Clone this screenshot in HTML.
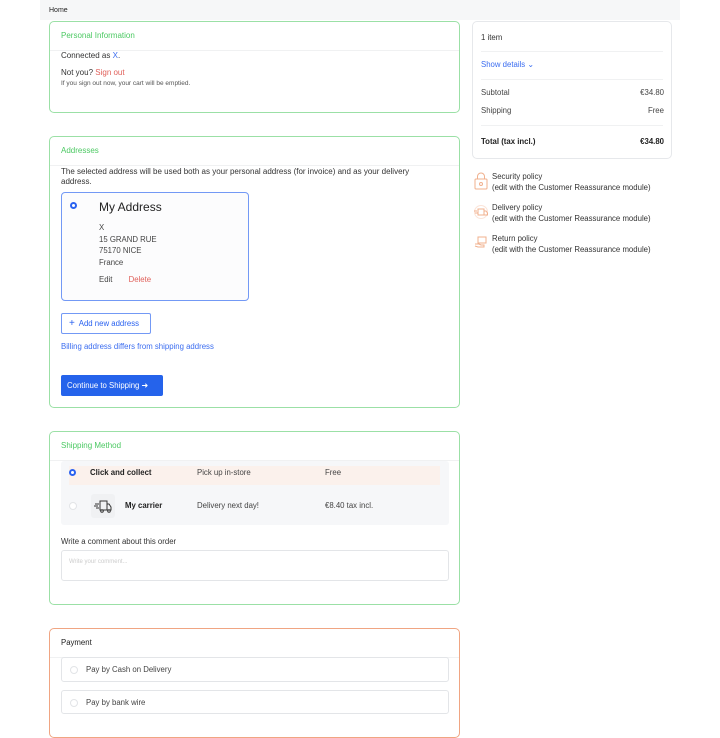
<!DOCTYPE html>
<html><head><meta charset="utf-8"><style>
*{margin:0;padding:0;box-sizing:border-box}
body{width:720px;height:720px;overflow:hidden;background:#fff;font-family:"Liberation Sans",sans-serif;color:#333;position:relative;font-size:8px}
.a{position:absolute;white-space:nowrap;line-height:1}
.card{position:absolute;border:1px solid #9be0a6;border-radius:5px;background:#fff}
.hd{position:absolute;left:11px;color:#4cc963;font-size:8px}
.dv{position:absolute;left:0;right:0;height:1px;background:#f0f1f2}
.rad{position:absolute;width:8px;height:8px;border-radius:50%;border:1px solid #e2e4e7;background:#fff}
.rsel{border:2.5px solid #2a62f0}
.box{position:absolute;border:1px solid #e3e5e8;border-radius:3px;background:#fff}
.ri{position:absolute;right:0}
</style></head><body>
<div class="a" style="left:40px;top:0;width:640px;height:20px;background:#f6f7f8"></div>
<div class="a" style="left:49px;top:7px;font-size:7px;color:#222">Home</div>

<!-- Personal -->
<div class="card" style="left:49px;top:21px;width:411px;height:92px">
 <div class="hd a" style="top:10px">Personal Information</div>
 <div class="dv" style="top:28px"></div>
 <div class="a" style="left:11px;top:30px;font-size:8px;color:#333">Connected as <span style="color:#3b6df0">X</span>.</div>
 <div class="a" style="left:11px;top:47px;font-size:8px;color:#333">Not you? <span style="color:#e0605a">Sign out</span></div>
 <div class="a" style="left:11px;top:59px;font-size:6.5px;color:#555">If you sign out now, your cart will be emptied.</div>
</div>

<!-- Addresses -->
<div class="card" style="left:49px;top:136px;width:411px;height:272px">
 <div class="hd a" style="top:10px">Addresses</div>
 <div class="dv" style="top:28px"></div>
 <div class="a" style="left:11px;top:30px;font-size:8px;line-height:9.5px;color:#333;white-space:normal;width:370px">The selected address will be used both as your personal address (for invoice) and as your delivery address.</div>
 <div class="a" style="left:11px;top:55px;width:188px;height:109px;border:1px solid #7399f5;border-radius:4px;background:#fcfcfd">
  <div class="rad rsel" style="left:8px;top:9px;width:7px;height:7px"></div>
  <div class="a" style="left:37px;top:8px;font-size:12px;color:#222">My Address</div>
  <div class="a" style="left:37px;top:29px;font-size:7.8px;line-height:11.7px;color:#444">X<br>15 GRAND RUE<br>75170 NICE<br>France</div>
  <div class="a" style="left:37px;top:83px;font-size:7.8px;color:#444">Edit <span style="color:#e0605a;margin-left:14px">Delete</span></div>
 </div>
 <div class="a" style="left:11px;top:176px;width:90px;height:21px;border:1px solid #7399f5;border-radius:2px;color:#2a62f0;font-size:7.8px;padding:5px 0 0 7px"><span style="font-size:10px">+</span>&nbsp; Add new address</div>
 <div class="a" style="left:11px;top:206px;font-size:7.8px;color:#3b6df0">Billing address differs from shipping address</div>
 <div class="a" style="left:11px;top:238px;width:102px;height:21px;background:#2563eb;border-radius:2px;color:#fff;font-size:7.8px;padding:7px 0 0 6px">Continue to Shipping &#10140;</div>
</div>

<!-- Shipping -->
<div class="card" style="left:49px;top:431px;width:411px;height:174px">
 <div class="hd a" style="top:10px">Shipping Method</div>
 <div class="dv" style="top:28px"></div>
 <div class="a" style="left:11px;top:29px;width:388px;height:64px;background:#f6f7f9;border-radius:3px">
  <div class="a" style="left:8px;top:5px;width:371px;height:19px;background:#fbf1ec"></div>
  <div class="rad rsel" style="left:8px;top:8px;width:7px;height:7px"></div>
  <div class="a" style="left:29px;top:8px;font-size:7.8px;font-weight:bold;color:#222">Click and collect</div>
  <div class="a" style="left:136px;top:8px;font-size:7.8px;color:#444">Pick up in-store</div>
  <div class="a" style="left:264px;top:8px;font-size:7.8px;color:#444">Free</div>
  <div class="rad" style="left:8px;top:41px"></div>
  <div class="a" style="left:30px;top:33px;width:24px;height:24px;background:#f0f1f3;border-radius:3px">
   <svg width="24" height="24" viewBox="0 0 24 24" fill="none" stroke="#333" stroke-width="1"><path d="M9 7h7v9H9zM16 10h2l2 3v3h-4M4 10h4M3 12h4M5 14h3"/><circle cx="11" cy="17" r="1.3"/><circle cx="18" cy="17" r="1.3"/></svg>
  </div>
  <div class="a" style="left:64px;top:41px;font-size:7.8px;font-weight:bold;color:#222">My carrier</div>
  <div class="a" style="left:136px;top:41px;font-size:7.8px;color:#444">Delivery next day!</div>
  <div class="a" style="left:264px;top:41px;font-size:7.8px;color:#444">€8.40 tax incl.</div>
 </div>
 <div class="a" style="left:11px;top:106px;font-size:7.8px;color:#333">Write a comment about this order</div>
 <div class="box" style="left:11px;top:118px;width:388px;height:31px"><div class="a" style="left:7px;top:8px;font-size:6px;color:#ccc">Write your comment...</div></div>
</div>

<!-- Payment -->
<div class="card" style="left:49px;top:628px;width:411px;height:110px;border-color:#f0a582">
 <div class="a" style="left:11px;top:10px;font-size:7.8px;color:#222">Payment</div>
 <div class="dv" style="top:28px"></div>
 <div class="box" style="left:11px;top:28px;width:388px;height:25px"><div class="rad" style="left:8px;top:8px"></div><div class="a" style="left:24px;top:8px;font-size:7.8px;color:#444">Pay by Cash on Delivery</div></div>
 <div class="box" style="left:11px;top:61px;width:388px;height:24px"><div class="rad" style="left:8px;top:8px"></div><div class="a" style="left:24px;top:8px;font-size:7.8px;color:#444">Pay by bank wire</div></div>
</div>

<!-- Summary -->
<div class="a" style="left:472px;top:21px;width:200px;height:138px;border:1px solid #e6e8eb;border-radius:5px;background:#fff">
 <div class="a" style="left:8px;top:12px;font-size:7.8px;color:#333">1 item</div>
 <div class="dv" style="top:29px;left:8px;right:8px"></div>
 <div class="a" style="left:8px;top:39px;font-size:7.8px;color:#3b6df0">Show details &#8964;</div>
 <div class="dv" style="top:57px;left:8px;right:8px"></div>
 <div class="a" style="left:8px;top:67px;width:183px;font-size:7.8px;color:#444">Subtotal<span class="ri">€34.80</span></div>
 <div class="a" style="left:8px;top:85px;width:183px;font-size:7.8px;color:#444">Shipping<span class="ri">Free</span></div>
 <div class="dv" style="top:103px;left:8px;right:8px"></div>
 <div class="a" style="left:8px;top:116px;width:183px;font-size:7.8px;font-weight:bold;color:#222">Total (tax incl.)<span class="ri">€34.80</span></div>
</div>

<svg class="a" style="left:473px;top:172px" width="16" height="18" viewBox="0 0 16 18" fill="none" stroke="#f0b08e" stroke-width="1"><rect x="2" y="7" width="12" height="10" rx="1"/><path d="M4.5 7V4.5a3.5 3.5 0 0 1 7 0V7"/><circle cx="8" cy="12" r="1.5"/></svg>
<svg class="a" style="left:472px;top:205px" width="18" height="14" viewBox="0 0 18 14" fill="none" stroke="#f0b08e" stroke-width="1"><circle cx="9" cy="7" r="6.5" stroke="#fbe4d8"/><path d="M6 4h6v6H6zM12 6h2l1.5 2v2H12M2 6h3M3 8h3"/></svg>
<svg class="a" style="left:474px;top:235px" width="14" height="14" viewBox="0 0 14 14" fill="none" stroke="#f0b08e" stroke-width="1"><rect x="4" y="2" width="8" height="6"/><path d="M1 9h4l2 1h3v2H4l-3-1"/></svg>
<div class="a" style="left:492px;top:171px;font-size:7.8px;line-height:11px;color:#333">Security policy<br>(edit with the Customer Reassurance module)</div>
<div class="a" style="left:492px;top:202px;font-size:7.8px;line-height:11px;color:#333">Delivery policy<br>(edit with the Customer Reassurance module)</div>
<div class="a" style="left:492px;top:233px;font-size:7.8px;line-height:11px;color:#333">Return policy<br>(edit with the Customer Reassurance module)</div>
</body></html>
